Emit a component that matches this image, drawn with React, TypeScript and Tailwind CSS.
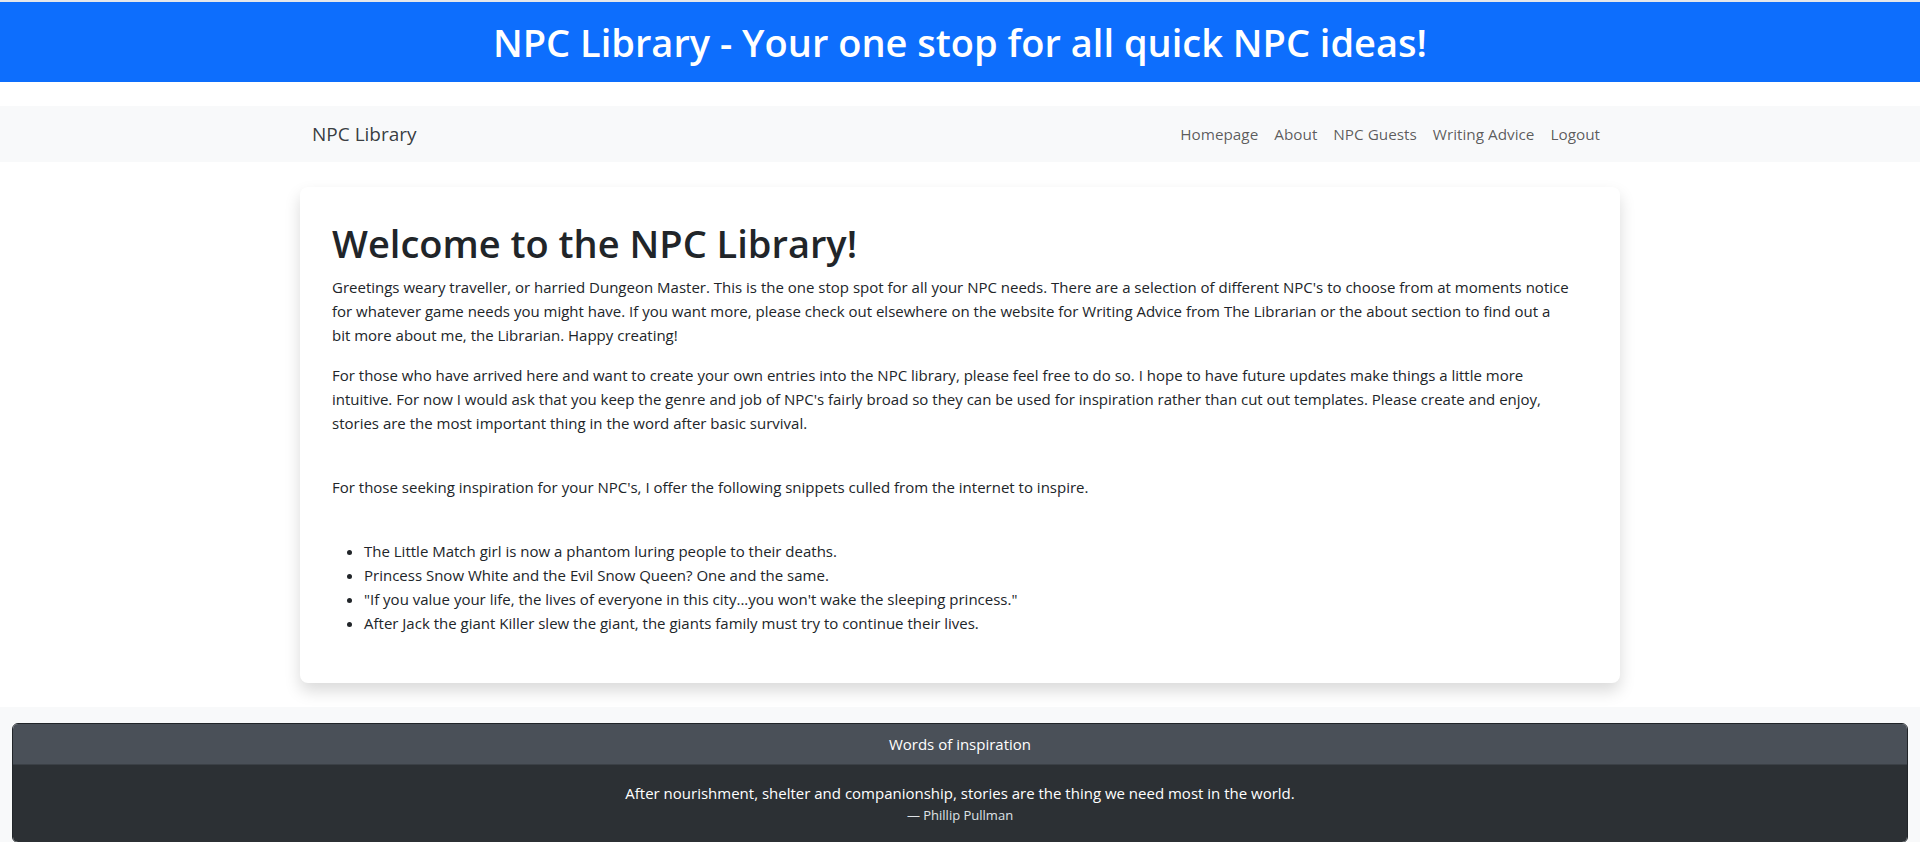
export default function App() {
  const snippets = [
    "The Little Match girl is now a phantom luring people to their deaths.",
    "Princess Snow White and the Evil Snow Queen? One and the same.",
    "\"If you value your life, the lives of everyone in this city...you won't wake the sleeping princess.\"",
    "After Jack the giant Killer slew the giant, the giants family must try to continue their lives.",
  ]
  const links = ["Homepage", "About", "NPC Guests", "Writing Advice", "Logout"]

  return (
    <div className="min-h-screen bg-white font-['Open_Sans',sans-serif] text-[15px] leading-6 text-[#212529]">
      {/* Banner */}
      <div className="h-[2px] bg-[#e5e7ea]" />
      <header className="bg-[#0d6efd] py-4">
        <h1 className="text-center text-[38px] font-semibold leading-[48px] text-white">
          NPC Library - Your one stop for all quick NPC ideas!
        </h1>
      </header>

      {/* Navbar */}
      <nav className="mt-6 bg-[#f8f9fa]">
        <div className="mx-auto flex h-14 w-[1320px] items-center justify-between px-3">
          <a className="text-[19px] leading-[30px] text-[#212529]/90">NPC Library</a>
          <ul className="flex items-center">
            {links.map((l) => (
              <li key={l}>
                <a className="block px-2 py-2 text-[15.3px] text-[#000]/65">{l}</a>
              </li>
            ))}
          </ul>
        </div>
      </nav>

      {/* Main card */}
      <main className="mx-auto mt-[25px] mb-6 w-[1320px] rounded-lg bg-white p-8 shadow-[0_8px_16px_rgba(0,0,0,0.15)]">
        <h1 className="mb-2 text-[38px] font-semibold leading-[48px]">Welcome to the NPC Library!</h1>
        <p className="mb-4">
          Greetings weary traveller, or harried Dungeon Master. This is the one stop spot for all your NPC needs. There
          are a selection of different NPC's to choose from at moments notice
          <br />
          for whatever game needs you might have. If you want more, please check out elsewhere on the website for
          Writing Advice from The Librarian or the about section to find out a
          <br />
          bit more about me, the Librarian. Happy creating!
        </p>
        <p className="mb-4">
          For those who have arrived here and want to create your own entries into the NPC library, please feel free to
          do so. I hope to have future updates make things a little more
          <br />
          intuitive. For now I would ask that you keep the genre and job of NPC's fairly broad so they can be used for
          inspiration rather than cut out templates. Please create and enjoy,
          <br />
          stories are the most important thing in the word after basic survival.
        </p>
        <div className="h-6" />
        <p className="mb-4">
          For those seeking inspiration for your NPC's, I offer the following snippets culled from the internet to
          inspire.
        </p>
        <div className="h-6" />
        <ul className="mb-4 list-disc pl-8">
          {snippets.map((s) => (
            <li key={s}>{s}</li>
          ))}
        </ul>
      </main>

      {/* Footer */}
      <footer className="bg-[#f8f9fa] px-3 pt-4 pb-4">
        <div className="overflow-hidden rounded-md border border-[#212529] text-center text-white">
          <div className="border-b border-black/20 bg-[#4a5058] py-2">Words of inspiration</div>
          <div className="bg-[#2c3034] p-4">
            <blockquote>
              <p>After nourishment, shelter and companionship, stories are the thing we need most in the world.</p>
            </blockquote>
            <figcaption className="text-[13px] leading-[21px] text-[#dee2e6]">— Phillip Pullman</figcaption>
          </div>
        </div>
      </footer>
    </div>
  )
}
